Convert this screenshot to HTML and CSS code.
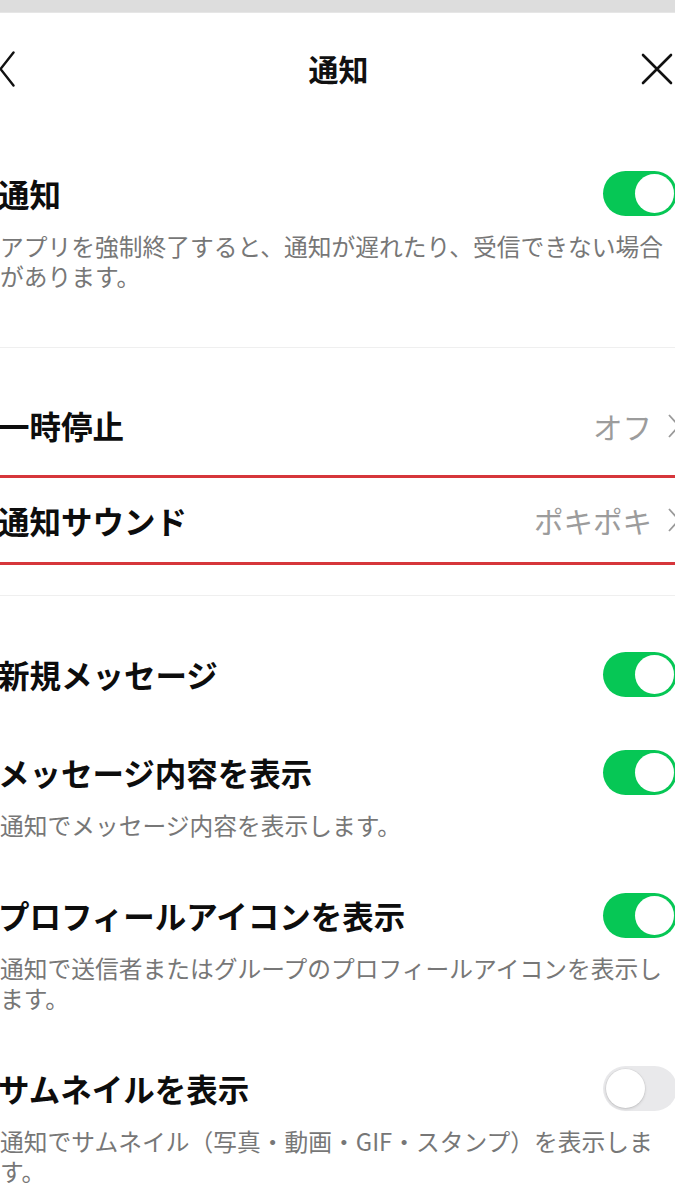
FILE: index.html
```html
<!DOCTYPE html>
<html lang="ja">
<head>
<meta charset="utf-8">
<title>通知</title>
<link rel="stylesheet" href="styles.css">
</head>
<body>
<div class="topbar"></div>
<div class="page">
  <header class="header">
    <svg class="back" width="16" height="36" viewBox="0 0 16 36"><polyline points="14.5,1.5 1.5,18 14.5,34.5" fill="none" stroke="#111" stroke-width="2.4" stroke-linecap="round" stroke-linejoin="round"/></svg>
    <h1 class="title">通知</h1>
    <svg class="close" width="32" height="32" viewBox="0 0 32 32"><path d="M2 2 L30 30 M30 2 L2 30" fill="none" stroke="#111" stroke-width="2.6" stroke-linecap="round"/></svg>
  </header>

  <section class="section sec-main">
    <div class="item">
      <div class="row">
        <span class="label">通知</span>
        <span class="toggle on"><span class="knob"></span></span>
      </div>
      <p class="desc">アプリを強制終了すると、通知が遅れたり、受信できない場合があります。</p>
    </div>
  </section>

  <section class="section sec-links">
    <div class="link-row first">
      <span class="label">一時停止</span>
      <span class="value">オフ<svg class="chev" width="12" height="24" viewBox="0 0 12 24"><polyline points="1,1 11,12 1,23" fill="none" stroke="#9a9a9a" stroke-width="1.8"/></svg></span>
    </div>
    <div class="link-row highlight">
      <span class="label">通知サウンド</span>
      <span class="value">ポキポキ<svg class="chev" width="12" height="24" viewBox="0 0 12 24"><polyline points="1,1 11,12 1,23" fill="none" stroke="#9a9a9a" stroke-width="1.8"/></svg></span>
    </div>
  </section>

  <section class="section sec-toggles">
    <div class="item">
      <div class="row">
        <span class="label">新規メッセージ</span>
        <span class="toggle on"><span class="knob"></span></span>
      </div>
    </div>
    <div class="item">
      <div class="row">
        <span class="label">メッセージ内容を表示</span>
        <span class="toggle on"><span class="knob"></span></span>
      </div>
      <p class="desc">通知でメッセージ内容を表示します。</p>
    </div>
    <div class="item">
      <div class="row">
        <span class="label">プロフィールアイコンを表示</span>
        <span class="toggle on"><span class="knob"></span></span>
      </div>
      <p class="desc">通知で送信者またはグループのプロフィールアイコンを表示します。</p>
    </div>
    <div class="item">
      <div class="row">
        <span class="label">サムネイルを表示</span>
        <span class="toggle off"><span class="knob"></span></span>
      </div>
      <p class="desc">通知でサムネイル（写真・動画・GIF・スタンプ）を表示します。</p>
    </div>
  </section>
</div>
</body>
</html>
```

FILE: styles.css
```css
* {
  box-sizing: border-box;
  margin: 0;
  padding: 0;
}

html, body {
  background: #ffffff;
}

body {
  width: 675px;
  height: 1200px;
  overflow: hidden;
  font-family: "Noto Sans CJK JP", "Noto Sans", sans-serif;
  color: #111111;
}

.topbar {
  height: 13px;
  background: #dddddd;
  border-bottom: 1px solid #e6e6e6;
}

.page {
  width: 680px;
}

.header {
  height: 114px;
  display: grid;
  grid-template-columns: 1fr auto 1fr;
  align-items: center;
}

.back {
  justify-self: start;
  display: block;
  margin-left: -1px;
  margin-bottom: 2px;
}

.close {
  justify-self: end;
  display: block;
  margin-right: 7px;
  margin-bottom: 2px;
}

.title {
  font-size: 30px;
  font-weight: 700;
  line-height: 40px;
  margin-bottom: 4px;
  margin-right: 3px;
}

.section + .section {
  border-top: 1px solid #efefef;
}

.sec-main {
  padding: 44px 0 56px;
}

.sec-links {
  padding: 28px 0 30px;
}

.sec-toggles {
  padding-top: 56px;
  display: flex;
  flex-direction: column;
  gap: 53px;
}

.row {
  height: 45px;
  display: flex;
  align-items: center;
  justify-content: space-between;
}

.label {
  font-size: 31.5px;
  font-weight: 700;
  line-height: 45px;
  margin-left: -2px;
  color: #0d0d0d;
}

.desc {
  margin-top: 15px;
  width: 670px;
  font-size: 23.75px;
  line-height: 30px;
  color: #777777;
}

.toggle {
  position: relative;
  width: 74px;
  height: 45px;
  border-radius: 23px;
  margin-right: 3px;
  flex: none;
}

.toggle.on {
  background: #06c755;
}

.toggle.off {
  background: #e9e9eb;
}

.knob {
  position: absolute;
  top: 3px;
  width: 39px;
  height: 39px;
  border-radius: 50%;
  background: #ffffff;
}

.toggle.on .knob {
  right: 3px;
}

.toggle.off .knob {
  left: 3px;
  box-shadow: 0 1px 3px rgba(0, 0, 0, 0.16), 0 0 0 0.5px rgba(0, 0, 0, 0.06);
}

.link-row {
  display: flex;
  align-items: center;
  justify-content: space-between;
}

.link-row.first {
  height: 99px;
}

.link-row.highlight {
  height: 90px;
  width: 675px;
  border-top: 3px solid #d6363b;
  border-bottom: 3px solid #d6363b;
}

.value {
  display: flex;
  align-items: center;
  gap: 16px;
  font-size: 29.5px;
  font-weight: 400;
  color: #9c9c9c;
}

.link-row.first .value {
  margin-right: 0;
}

.link-row.highlight .value {
  margin-right: -5px;
}

.chev {
  display: block;
  flex: none;
}
```
